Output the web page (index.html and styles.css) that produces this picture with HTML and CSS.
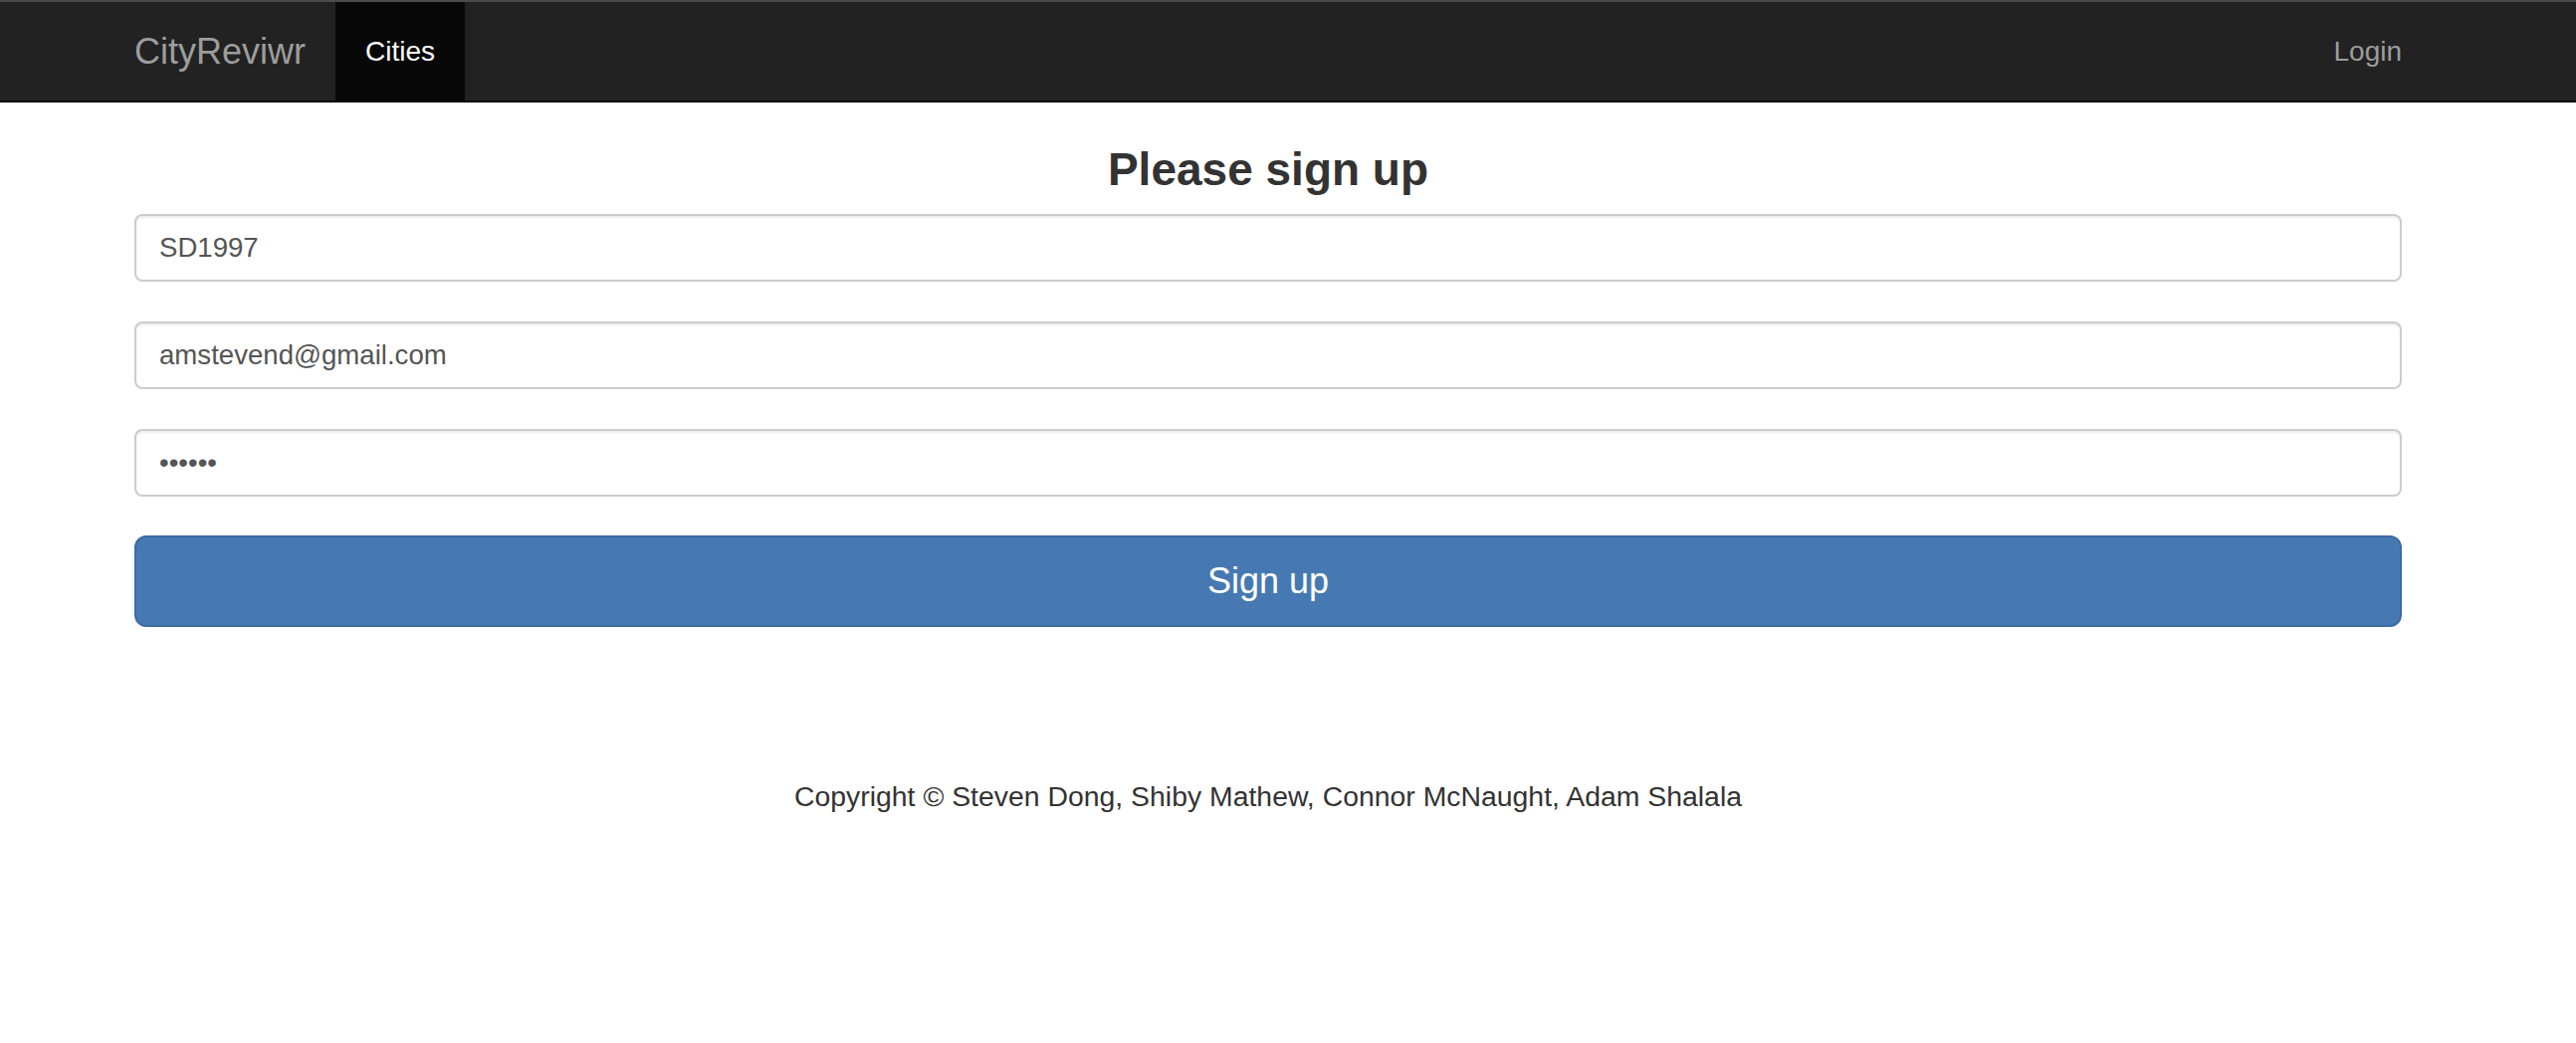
FILE: index.html
```html
<!DOCTYPE html>
<html lang="en">
<head>
<meta charset="utf-8">
<title>CityReviwr - Sign up</title>
<link rel="stylesheet" href="styles.css">
</head>
<body>
<nav class="navbar">
  <div class="container nav-inner">
    <a class="brand" href="#">CityReviwr</a>
    <ul class="nav">
      <li class="active"><a href="#">Cities</a></li>
    </ul>
    <ul class="nav nav-right">
      <li><a href="#">Login</a></li>
    </ul>
  </div>
</nav>
<main class="container">
  <h2 class="title">Please sign up</h2>
  <form class="signup">
    <input class="field" type="text" value="SD1997">
    <input class="field" type="email" value="amstevend@gmail.com">
    <input class="field" type="password" value="secret">
    <button class="btn-primary" type="button">Sign up</button>
  </form>
  <footer class="footer">Copyright © Steven Dong, Shiby Mathew, Connor McNaught, Adam Shalala</footer>
</main>
</body>
</html>
```
FILE: styles.css
```css
* { box-sizing: border-box; }
html, body { margin: 0; padding: 0; background: #fff; }
body {
  font-family: "Liberation Sans", Arial, Helvetica, sans-serif;
  font-size: 28px;
  color: #333;
}
.container {
  margin: 0 175px 0 135px;
}
.navbar {
  background: #222;
  border-top: 2px solid #4b4b4d;
  border-bottom: 2px solid #080808;
}
.nav-inner {
  display: flex;
  align-items: stretch;
  height: 99px;
}
.brand {
  margin-left: -30px;
  padding: 0 30px;
  font-size: 36px;
  line-height: 99px;
  color: #9d9d9d;
  text-decoration: none;
}
.nav {
  display: flex;
  list-style: none;
  margin: 0;
  padding: 0;
}
.nav a {
  display: block;
  padding: 0 30px;
  line-height: 99px;
  font-size: 28px;
  color: #9d9d9d;
  text-decoration: none;
}
.nav .active a {
  background: #080808;
  color: #fff;
}
.nav-right {
  margin-left: auto;
  margin-right: -30px;
}
.title {
  margin: 40px 0 17px;
  text-align: center;
  font-size: 46px;
  line-height: 55px;
  font-weight: 700;
  color: #333;
}
.signup {
  display: flex;
  flex-direction: column;
  gap: 40px;
}
.field {
  display: block;
  width: 100%;
  height: 68px;
  padding: 12px 23px;
  font-family: inherit;
  font-size: 27.6px;
  color: #555;
  background: #fff;
  border: 2px solid #ccc;
  border-radius: 8px;
  box-shadow: inset 0 2px 2px rgba(0,0,0,.075);
  outline: none;
}
.btn-primary {
  display: block;
  width: 100%;
  height: 92px;
  margin-top: -1px;
  font-family: inherit;
  font-size: 36px;
  color: #fff;
  background: #4679b2;
  border: 2px solid #3b6aa2;
  border-radius: 12px;
  cursor: pointer;
}
.footer {
  margin-top: 150px;
  text-align: center;
  font-size: 28.4px;
  line-height: 40px;
  color: #333;
}
```
